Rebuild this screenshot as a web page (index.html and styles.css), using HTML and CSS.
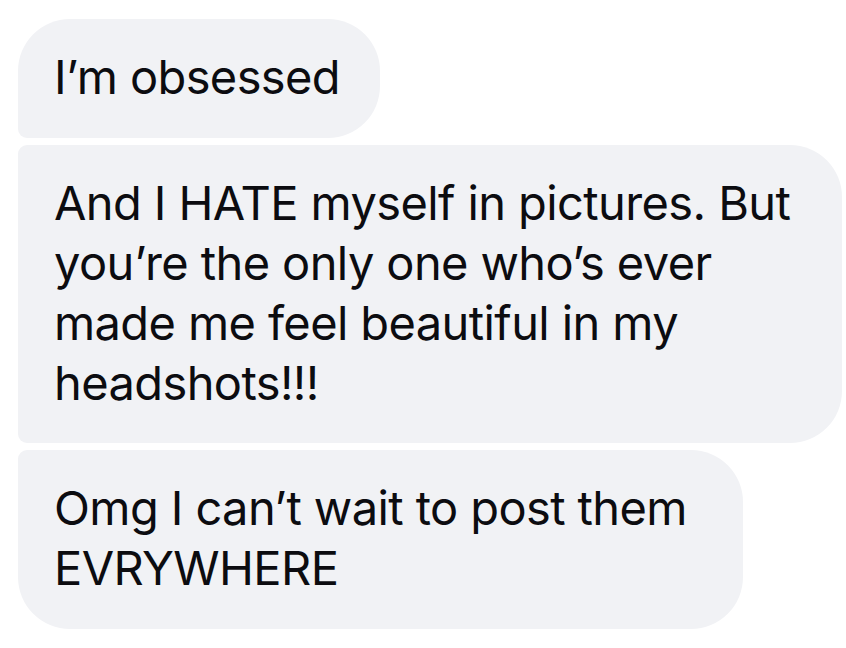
FILE: index.html
```html
<!DOCTYPE html>
<html lang="en">
<head>
<meta charset="utf-8">
<title>Messages</title>
<link rel="stylesheet" href="styles.css">
</head>
<body>
<div class="thread">
  <div class="bubble bubble--first b1">I’m obsessed</div>
  <div class="bubble bubble--middle b2">And I HATE myself in pictures. But<br>you’re the only one who’s ever<br>made me feel beautiful in my<br>headshots!!!</div>
  <div class="bubble bubble--last b3">Omg I can’t wait to post them<br>EVRYWHERE</div>
</div>
</body>
</html>
```
FILE: styles.css
```css
html, body {
  margin: 0;
  padding: 0;
  background: #ffffff;
}

.thread {
  display: flex;
  flex-direction: column;
  align-items: flex-start;
  gap: 7px;
  padding: 19px 0 0 18px;
  font-family: "Inter", "Liberation Sans", sans-serif;
}

.bubble {
  box-sizing: border-box;
  background: #f1f2f5;
  color: #0c0c10;
  font-size: 47px;
  line-height: 60px;
  letter-spacing: -0.6px;
  padding: 28px 20px 31px 36px;
  white-space: nowrap;
  border-radius: 52px;
}

.bubble--first {
  border-bottom-left-radius: 9px;
}

.bubble--middle {
  border-top-left-radius: 9px;
  border-bottom-left-radius: 9px;
}

.bubble--last {
  border-top-left-radius: 9px;
}

.b1 { width: 362px; height: 119px; }
.b2 { width: 824px; height: 298px; }
.b3 { width: 725px; height: 179px; }
```
